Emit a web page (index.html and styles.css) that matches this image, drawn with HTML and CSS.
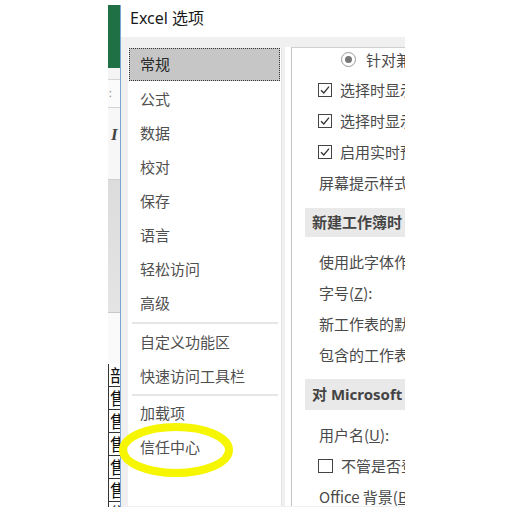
FILE: index.html
```html
<!DOCTYPE html>
<html>
<head>
<meta charset="utf-8">
<link rel="stylesheet" href="styles.css">
</head>
<body>
<div class="screen">
  <div class="strip">
    <div class="s-green"></div>
    <div class="s-r1"></div>
    <div class="s-r2">:</div>
    <div class="s-r3"><span class="ital">I</span></div>
    <div class="s-r4"></div>
    <div class="s-r5"></div>
    <div class="s-cells">
      <div class="cell">部</div>
      <div class="cell">售</div>
      <div class="cell">售</div>
      <div class="cell">售</div>
      <div class="cell">售</div>
      <div class="cell">售</div>
      <div class="cell">售</div>
    </div>
  </div>
  <div class="dialog">
    <div class="titlebar">Excel 选项</div>
    <div class="body">
      <div class="nav">
        <div class="item selected">常规</div>
        <div class="item">公式</div>
        <div class="item">数据</div>
        <div class="item">校对</div>
        <div class="item">保存</div>
        <div class="item">语言</div>
        <div class="item">轻松访问</div>
        <div class="item">高级</div>
        <div class="sep sep1"></div>
        <div class="item">自定义功能区</div>
        <div class="item">快速访问工具栏</div>
        <div class="sep sep2"></div>
        <div class="item">加载项</div>
        <div class="item">信任中心</div>
      </div>
      <div class="pane">
        <div class="inner">
          <div class="row r-first radio-row">
            <span class="radio"><span class="dot"></span></span>
            <span class="txt">针对兼容性优化</span>
          </div>
          <div class="row cb-row">
            <svg class="cb" width="14" height="14" viewBox="0 0 14 14"><rect x="0.5" y="0.5" width="13" height="13" fill="#fff" stroke="#444"/><polyline points="3,7.2 5.8,10 11,3.6" fill="none" stroke="#333" stroke-width="1.3"/></svg>
            <span class="txt">选择时显示浮动工具栏</span>
          </div>
          <div class="row cb-row">
            <svg class="cb" width="14" height="14" viewBox="0 0 14 14"><rect x="0.5" y="0.5" width="13" height="13" fill="#fff" stroke="#444"/><polyline points="3,7.2 5.8,10 11,3.6" fill="none" stroke="#333" stroke-width="1.3"/></svg>
            <span class="txt">选择时显示快速分析选项</span>
          </div>
          <div class="row cb-row">
            <svg class="cb" width="14" height="14" viewBox="0 0 14 14"><rect x="0.5" y="0.5" width="13" height="13" fill="#fff" stroke="#444"/><polyline points="3,7.2 5.8,10 11,3.6" fill="none" stroke="#333" stroke-width="1.3"/></svg>
            <span class="txt">启用实时预览</span>
          </div>
          <div class="row plain">屏幕提示样式</div>
          <div class="header h1">新建工作簿时</div>
          <div class="row plain first-after">使用此字体作为默认字体</div>
          <div class="row plain">字号(<u>Z</u>):</div>
          <div class="row plain">新工作表的默认视图</div>
          <div class="row plain">包含的工作表数</div>
          <div class="header h2">对 Microsoft Office 进行个性化设置</div>
          <div class="row plain first-after">用户名(<u>U</u>):</div>
          <div class="row cb-row">
            <svg class="cb" width="15" height="14" viewBox="0 0 15 14"><rect x="0.5" y="0.5" width="14" height="13" fill="#fff" stroke="#444"/></svg>
            <span class="txt">不管是否登录到 Office</span>
          </div>
          <div class="row plain">Office 背景(<u>B</u>):</div>
        </div>
      </div>
    </div>
  </div>
</div>
<svg class="circle-mark" width="130" height="70" viewBox="0 0 130 70">
  <ellipse cx="65" cy="35" rx="53" ry="23" fill="none" stroke="#f6f600" stroke-width="8"/>
</svg>
</body>
</html>
```
FILE: styles.css
```css
html, body {
  margin: 0;
  padding: 0;
  background: #ffffff;
}
body {
  width: 512px;
  height: 520px;
  overflow: hidden;
  font-family: "Noto Sans", "Noto Sans CJK SC", sans-serif;
  position: relative;
}
.screen {
  margin: 5px 0 0 108px;
  width: 297px;
  height: 502px;
  display: flex;
  overflow: hidden;
}
.strip {
  width: 12px;
  flex: none;
  display: flex;
  flex-direction: column;
  overflow: hidden;
  background: #fff;
}
.s-green {
  height: 63px;
  background: #1f7145;
  flex: none;
}
.s-r1 {
  height: 11px;
  background: #f4f4f4;
  border-bottom: 1px solid #d4d4d4;
  flex: none;
}
.s-r2 {
  height: 27px;
  background: #fbfbfb;
  border-bottom: 1px solid #d4d4d4;
  font-size: 10px;
  color: #777;
  line-height: 27px;
  padding-left: 1px;
  flex: none;
}
.s-r3 {
  height: 71px;
  background: #f7f7f7;
  border-bottom: 1px solid #d0d0d0;
  flex: none;
}
.ital {
  display: block;
  font-family: "Liberation Serif", serif;
  font-style: italic;
  font-weight: bold;
  font-size: 17px;
  color: #444;
  line-height: 17px;
  padding: 18px 0 0 3px;
}
.s-r4 {
  height: 132px;
  background: linear-gradient(#dcdcdc, #e4e4e4);
  border-bottom: 1px solid #c8c8c8;
  flex: none;
}
.s-r5 {
  height: 51px;
  background: #fafafa;
  flex: none;
}
.s-cells {
  flex: none;
  border-left: 1px solid #333;
}
.cell {
  height: 22px;
  border-bottom: 1px solid #333;
  font-family: "Noto Sans CJK SC", sans-serif;
  font-size: 17px;
  line-height: 22px;
  color: #111;
  padding-left: 1px;
  white-space: nowrap;
}
.dialog {
  flex: 1;
  display: flex;
  flex-direction: column;
  border-left: 1px solid #7aa6d6;
  min-width: 0;
}
.titlebar {
  height: 32px;
  line-height: 27px;
  padding-left: 9px;
  background: #fff;
  font-size: 16px;
  color: #1a1a1a;
  flex: none;
}
.body {
  flex: 1;
  background: #f0f0f0;
  display: flex;
  padding: 10px 0 1px 7px;
  gap: 3px;
  min-height: 0;
}
.nav {
  width: 153px;
  flex: none;
  background: #fff;
  margin-top: 1px;
  display: flex;
  flex-direction: column;
  border-right: 1px solid #e2e2e2;
}
.item {
  height: 32px;
  line-height: 32px;
  padding-bottom: 2px;
  padding-left: 12px;
  font-family: "Noto Sans CJK SC", sans-serif;
  font-size: 15px;
  color: #505050;
  flex: none;
  white-space: nowrap;
}
.item.selected {
  height: 29px;
  line-height: 29px;
  padding-bottom: 2px;
  margin: 0 1px 2px 1px;
  padding-left: 10px;
  background: #c6c6c6;
  border: 1px dotted #333;
  color: #262626;
}
.sep {
  flex: none;
  margin: 0 3px 0 4px;
  border-top: 2px solid #e6e6e6;
}
.sep1 {
  height: 2px;
  margin-top: 1px;
}
.sep2 {
  height: 1px;
  margin-top: 0;
}
.pane {
  flex: 1;
  background: #fff;
  min-width: 0;
  display: flex;
}
.inner {
  flex: 1;
  margin-left: 6px;
  border-left: 1px solid #c4c4c4;
  border-top: 1px solid #cfcfcf;
  min-width: 0;
  overflow: hidden;
}
.row {
  height: 31px;
  display: flex;
  align-items: center;
  white-space: nowrap;
  font-family: "Noto Sans CJK SC", sans-serif;
  font-size: 15px;
  color: #4a4a4a;
}
.row.r-first {
  height: 23px;
  padding-bottom: 3px;
}
.radio-row {
  padding-left: 49px;
}
.radio {
  width: 13px;
  height: 13px;
  border: 1px solid #9a9a9a;
  border-radius: 50%;
  display: flex;
  align-items: center;
  justify-content: center;
  margin-right: 10px;
  flex: none;
}
.dot {
  width: 7px;
  height: 7px;
  border-radius: 50%;
  background: #777;
}
.cb-row {
  padding-left: 26px;
}
.cb {
  flex: none;
  margin-right: 8px;
}
.plain {
  padding-left: 27px;
}
.header {
  height: 29px;
  line-height: 29px;
  margin-left: 13px;
  padding-left: 7px;
  background: #e9e9e9;
  font-family: "Noto Sans", "Noto Sans CJK SC", sans-serif;
  font-weight: bold;
  font-size: 15px;
  color: #444;
  white-space: nowrap;
}
.h1 {
  margin-top: 10px;
}
.h2 {
  margin-top: 9px;
  height: 31px;
  line-height: 31px;
}
.first-after {
  margin-top: 9px;
}
.circle-mark {
  position: absolute;
  left: 111px;
  top: 415px;
}
```
